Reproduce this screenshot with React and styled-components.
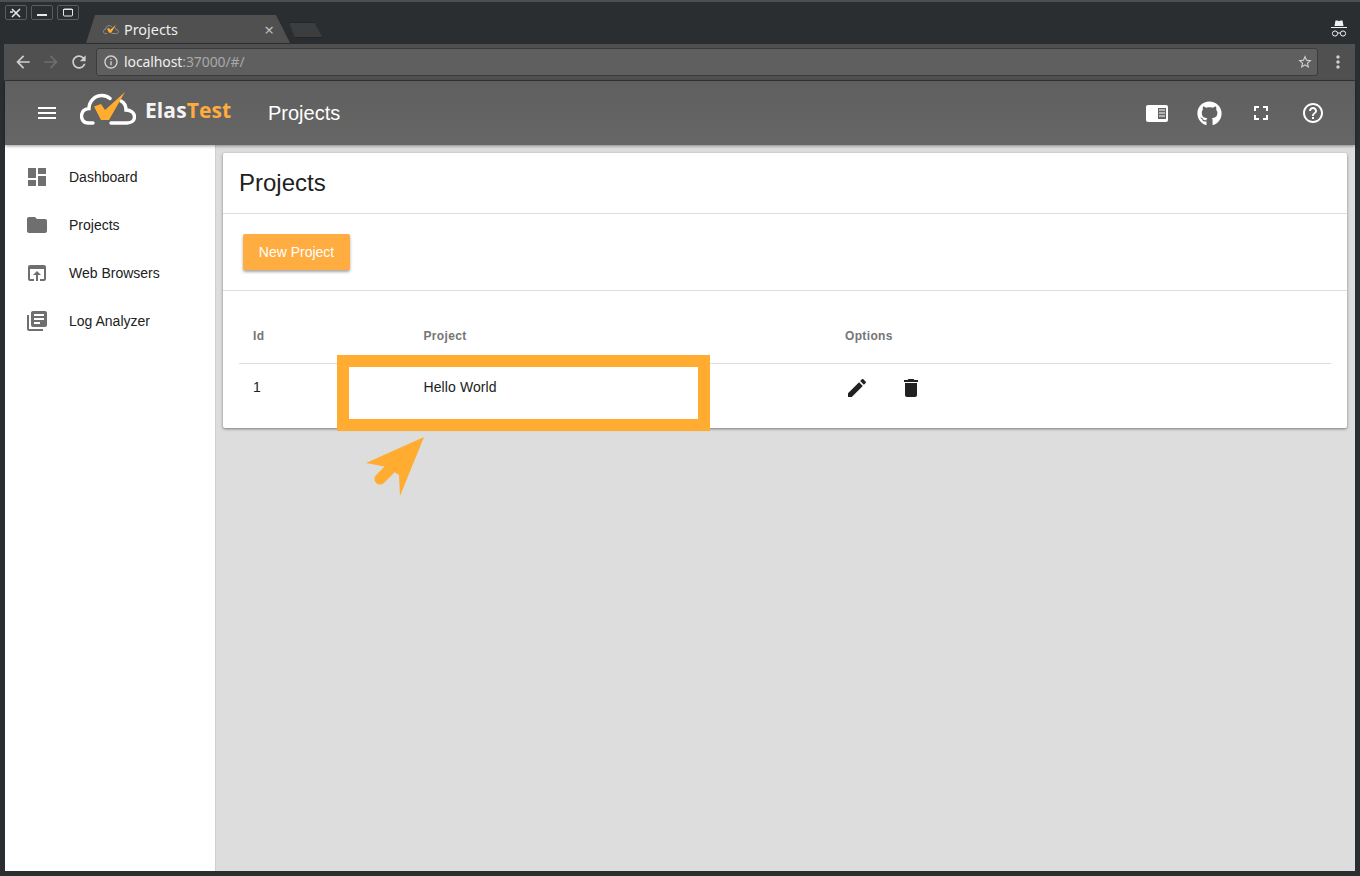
import React from 'react';
import styled, { createGlobalStyle } from 'styled-components';
import { FaGithub } from 'react-icons/fa';

const Global = createGlobalStyle`
  html, body { margin: 0; padding: 0; background: #2b2e31; }
  * { box-sizing: border-box; }
`;

const Window = styled.div`
  position: relative;
  width: 1360px;
  height: 876px;
  display: flex;
  flex-direction: column;
  overflow: hidden;
  background: #2b2e31;
  border-top: 2px solid #4d4f51;
  font-family: "Liberation Sans", sans-serif;
`;
const TabStrip = styled.div`
  height: 42px;
  flex: none;
  display: flex;
  align-items: flex-start;
  padding: 3px 12px 0 5px;
`;
const WinButtons = styled.div`
  display: flex;
  gap: 4px;
  margin-right: 6px;
`;
const WinButton = styled.div`
  width: 22px;
  height: 15px;
  border: 1px solid #5a5c5e;
  border-radius: 2px;
  display: flex;
  align-items: center;
  justify-content: center;
  color: #e4e4e4;
`;
const Tab = styled.div`
  width: 204px;
  height: 28px;
  margin-top: 10px;
  margin-left: 1px;
  padding: 0 16px 0 17px;
  display: flex;
  align-items: center;
  gap: 5px;
  background: #505050;
  clip-path: polygon(0 100%, 9px 0, 190px 0, 204px 100%);
  color: #eeeeee;
  font-family: "Noto Sans", sans-serif;
  font-size: 14.4px;
`;
const TabTitle = styled.span`
  flex: 1;
`;
const TabClose = styled.span`
  font-size: 17px;
  color: #bdbdbd;
  line-height: 1;
`;
const NewTab = styled.div`
  width: 34px;
  height: 16px;
  margin: 17px 0 0 -1px;
  background: #3b3d3f;
  border: 1px solid #232527;
  clip-path: polygon(0 0, 25px 0, 34px 100%, 6px 100%);
`;
const Spacer = styled.div`
  flex: 1;
`;
const Incognito = styled.svg`
  width: 18px;
  height: 18px;
  margin-top: 14px;
`;
const Frame = styled.div`
  flex: 1;
  min-height: 0;
  margin: 0 5px 5px 5px;
  display: flex;
  flex-direction: column;
`;
const Toolbar = styled.div`
  height: 37px;
  flex: none;
  margin-left: -1px;
  display: flex;
  align-items: center;
  gap: 8px;
  padding: 0 7px 0 9px;
  background: #505050;
  border-bottom: 1px solid #333;
  color: #d0d0d0;
`;
const NavIcon = styled.svg`
  width: 20px;
  height: 20px;
  fill: ${p => (p.$off ? '#6e6e6e' : '#d0d0d0')};
  flex: none;
`;
const Omnibox = styled.div`
  flex: 1;
  height: 28px;
  margin: 0 2px 0 -1px;
  background: #5f5f5f;
  border: 1px solid #3c3c3c;
  border-radius: 3px;
  display: flex;
  align-items: center;
  gap: 5px;
  padding: 0 4px 1px 6px;
  font-family: "Noto Sans", sans-serif;
  font-size: 14px;
  letter-spacing: -0.1px;
  color: #f0f0f0;
`;
const Port = styled.span`
  color: #a8a8a8;
`;
const OmniIcon = styled.svg`
  width: 16px;
  height: 16px;
  fill: #d4d4d4;
  flex: none;
`;
const AppBar = styled.div`
  height: 64px;
  flex: none;
  display: flex;
  align-items: center;
  background: linear-gradient(#5f5f5f, #666666);
  padding: 0 16px 0 30px;
  color: #fff;
  box-shadow: 0 1px 3px rgba(0,0,0,.4);
  position: relative;
`;
const MenuIcon = styled.svg`
  width: 24px;
  height: 24px;
  fill: #fff;
  flex: none;
`;
const Logo = styled.div`
  display: flex;
  align-items: center;
  margin-left: 21px;
  margin-bottom: 8px;
  width: 188px;
`;
const LogoText = styled.span`
  font-family: "Open Sans", sans-serif;
  font-weight: 700;
  font-size: 21px;
  margin-left: 9px;
  margin-top: 2px;
  color: #f4f4f4;
  letter-spacing: 0.1px;
`;
const LogoAccent = styled.span`
  color: #ffac3c;
`;
const BarTitle = styled.div`
  font-size: 20px;
  color: #fff;
`;
const BarButton = styled.div`
  width: 52px;
  height: 40px;
  display: flex;
  align-items: center;
  justify-content: center;
  color: #fff;
`;
const BarIcon = styled.svg`
  width: 24px;
  height: 24px;
  fill: #fff;
`;
const Body = styled.div`
  flex: 1;
  min-height: 0;
  display: flex;
`;
const Sidebar = styled.nav`
  width: 211px;
  flex: none;
  background: #fff;
  border-right: 1px solid #cfcfcf;
  padding-top: 8px;
`;
const NavItem = styled.div`
  height: 48px;
  display: flex;
  align-items: center;
  gap: 20px;
  padding-left: 20px;
  font-size: 14px;
  color: #212121;
`;
const NavGlyph = styled.svg`
  width: 24px;
  height: 24px;
  fill: #6f6f6f;
  flex: none;
`;
const Content = styled.main`
  flex: 1;
  min-width: 0;
  background: #dddddd;
  padding: 8px 8px 8px 7px;
`;
const Card = styled.section`
  position: relative;
  background: #fff;
  border-radius: 2px;
  box-shadow: 0 1px 3px rgba(0,0,0,.45);
`;
const CardTitle = styled.h1`
  margin: 0;
  height: 61px;
  padding: 0 16px;
  display: flex;
  align-items: center;
  font-size: 24px;
  font-weight: 400;
  color: #212121;
  border-bottom: 1px solid #dedede;
`;
const Actions = styled.div`
  height: 77px;
  padding: 20px;
  border-bottom: 1px solid #dedede;
`;
const PrimaryButton = styled.button`
  width: 107px;
  height: 36px;
  border: 0;
  border-radius: 2px;
  background: #ffac40;
  color: #fff;
  font: 400 14px "Liberation Sans", sans-serif;
  box-shadow: 0 2px 3px rgba(0,0,0,.35);
`;
const Table = styled.div`
  padding: 18px 16px 0;
`;
const Row = styled.div`
  display: grid;
  grid-template-columns: 170.5px 421.5px 1fr;
  align-items: center;
  padding-left: 14px;
  height: ${p => (p.$head ? '55px' : '64px')};
  padding-bottom: ${p => (p.$head ? '0' : '18px')};
  border-bottom: ${p => (p.$head ? '1px solid #dedede' : '0')};
  font-size: ${p => (p.$head ? '12px' : '14px')};
  font-weight: ${p => (p.$head ? 700 : 400)};
  letter-spacing: ${p => (p.$head ? '0.35px' : '0.1px')};
  color: ${p => (p.$head ? '#757575' : '#212121')};
`;
const Options = styled.div`
  display: flex;
  gap: 30px;
  margin-top: 1px;
`;
const ActionIcon = styled.svg`
  width: 24px;
  height: 24px;
  fill: #212121;
`;
const Highlight = styled.div`
  position: absolute;
  left: 114px;
  top: 202px;
  width: 373px;
  height: 76px;
  border: 12px solid #ffac30;
  pointer-events: none;
`;
const Arrow = styled.svg`
  position: absolute;
  left: 143px;
  top: 284px;
  width: 60px;
  height: 60px;
`;
const LogoSvg = styled.svg`
  flex: none;
`;

const Icon = ({ as: C, d, ...rest }) => (
  <C viewBox="0 0 24 24" {...rest}><path d={d} /></C>
);

const P = {
  menu: 'M3 18h18v-2H3v2zm0-5h18v-2H3v2zm0-7v2h18V6H3z',
  dashboard: 'M3 13h8V3H3v10zm0 8h8v-6H3v6zm10 0h8V11h-8v10zm0-18v6h8V3h-8z',
  folder: 'M10 4H4c-1.1 0-1.99.9-1.99 2L2 18c0 1.1.9 2 2 2h16c1.1 0 2-.9 2-2V8c0-1.1-.9-2-2-2h-8l-2-2z',
  browser: 'M19 4H5c-1.11 0-2 .9-2 2v12c0 1.1.89 2 2 2h4v-2H5V8h14v10h-4v2h4c1.1 0 2-.9 2-2V6c0-1.1-.89-2-2-2zm-7 6l-4 4h3v6h2v-6h3l-4-4z',
  library: 'M4 6H2v14c0 1.1.9 2 2 2h14v-2H4V6zm16-4H8c-1.1 0-2 .9-2 2v12c0 1.1.9 2 2 2h12c1.1 0 2-.9 2-2V4c0-1.1-.9-2-2-2zm-1 9H9V9h10v2zm-4 4H9v-2h6v2zm4-8H9V5h10v2z',
  edit: 'M3 17.25V21h3.75L17.81 9.94l-3.75-3.75L3 17.25zM20.71 7.04c.39-.39.39-1.02 0-1.41l-2.34-2.34c-.39-.39-1.02-.39-1.41 0l-1.83 1.83 3.75 3.75 1.83-1.83z',
  trash: 'M6 19c0 1.1.9 2 2 2h8c1.1 0 2-.9 2-2V7H6v12zM19 4h-3.5l-1-1h-5l-1 1H5v2h14V4z',
  fullscreen: 'M7 14H5v5h5v-2H7v-3zm-2-4h2V7h3V5H5v5zm12 7h-3v2h5v-5h-2v3zM14 5v2h3v3h2V5h-5z',
  help: 'M11 18h2v-2h-2v2zm1-16C6.48 2 2 6.48 2 12s4.48 10 10 10 10-4.48 10-10S17.52 2 12 2zm0 18c-4.41 0-8-3.59-8-8s3.59-8 8-8 8 3.59 8 8-3.59 8-8 8zm0-14c-2.21 0-4 1.79-4 4h2c0-1.1.9-2 2-2s2 .9 2 2c0 2-3 1.75-3 5h2c0-2.25 3-2.5 3-5 0-2.21-1.79-4-4-4z',
  back: 'M20 11H7.83l5.59-5.59L12 4l-8 8 8 8 1.41-1.41L7.83 13H20v-2z',
  forward: 'M12 4l-1.41 1.41L16.17 11H4v2h12.17l-5.58 5.59L12 20l8-8z',
  refresh: 'M17.65 6.35C16.2 4.9 14.21 4 12 4c-4.42 0-7.99 3.58-7.99 8s3.57 8 7.99 8c3.73 0 6.84-2.55 7.73-6h-2.08c-.82 2.33-3.04 4-5.65 4-3.31 0-6-2.69-6-6s2.69-6 6-6c1.66 0 3.14.69 4.22 1.78L13 11h7V4l-2.35 2.35z',
  info: 'M11 17h2v-6h-2v6zm1-15C6.48 2 2 6.48 2 12s4.48 10 10 10 10-4.48 10-10S17.52 2 12 2zm0 18c-4.41 0-8-3.59-8-8s3.59-8 8-8 8 3.59 8 8-3.59 8-8 8zM11 9h2V7h-2v2z',
  star: 'M22 9.24l-7.19-.62L12 2 9.19 8.63 2 9.24l5.46 4.73L5.82 21 12 17.27 18.18 21l-1.63-7.03L22 9.24zM12 15.4l-3.76 2.27 1-4.28-3.32-2.88 4.38-.38L12 6.1l1.71 4.04 4.38.38-3.32 2.88 1 4.28L12 15.4z',
  more: 'M12 8c1.1 0 2-.9 2-2s-.9-2-2-2-2 .9-2 2 .9 2 2 2zm0 2c-1.1 0-2 .9-2 2s.9 2 2 2 2-.9 2-2-.9-2-2-2zm0 6c-1.1 0-2 .9-2 2s.9 2 2 2 2-.9 2-2-.9-2-2-2z',
};

const CloudLogo = ({ width, height, stroke, sw }) => (
  <LogoSvg viewBox="0 0 56 34" width={width} height={height}>
    <path
      d="M13 31 H8 C3 31 1.5 26.5 1.5 24 C1.5 19.5 5 16.5 9 16.5 C9 9 15 3.5 22 3.5 C26 3.5 28 4.5 30 6.5 M41 9 C44 10.5 46 14 46 18 C51 18 54.5 21 54.5 25 C54.5 29 51 31 47 31 H31"
      fill="none"
      stroke={stroke}
      strokeWidth={sw}
      strokeLinecap="round"
    />
    <path d="M14 14.5 L21 12 L25 18 L45 0 L29 28 L21 28 Z" fill="#ffac30" />
  </LogoSvg>
);

const navItems = [
  ['Dashboard', P.dashboard],
  ['Projects', P.folder],
  ['Web Browsers', P.browser],
  ['Log Analyzer', P.library],
];

export default function App() {
  return (
    <Window>
      <Global />
      <TabStrip>
        <WinButtons>
          <WinButton>
            <svg width="12" height="10" viewBox="0 0 12 10" fill="none" stroke="#e8e8e8" strokeWidth="1.6">
              <path d="M2 1l8 8M10 1L2 9M0 4h3" />
            </svg>
          </WinButton>
          <WinButton>
            <svg width="10" height="8" viewBox="0 0 10 8" fill="#e8e8e8"><rect x="0" y="5" width="10" height="2" /></svg>
          </WinButton>
          <WinButton>
            <svg width="10" height="9" viewBox="0 0 10 9" fill="none" stroke="#e8e8e8" strokeWidth="1"><rect x="0.5" y="1" width="9" height="7" rx="1" /><path d="M0 1.5h10" /></svg>
          </WinButton>
        </WinButtons>
        <Tab>
          <CloudLogo width={16} height={11} stroke="#9a9a9a" sw={3} />
          <TabTitle>Projects</TabTitle>
          <TabClose>×</TabClose>
        </Tab>
        <NewTab />
        <Spacer />
        <Incognito viewBox="0 0 18 18">
          <path d="M5.5 1.5h2l1.5.7 1.5-.7h2L13.5 7h-9z M1 8h16v1H1z" fill="#f0f0f0" />
          <circle cx="5" cy="14.5" r="2.6" fill="none" stroke="#f0f0f0" strokeWidth="1" />
          <circle cx="13" cy="14.5" r="2.6" fill="none" stroke="#f0f0f0" strokeWidth="1" />
          <path d="M7.5 14h3" stroke="#f0f0f0" strokeWidth="1" />
        </Incognito>
      </TabStrip>
      <Frame>
        <Toolbar>
          <Icon as={NavIcon} d={P.back} />
          <Icon as={NavIcon} d={P.forward} $off />
          <Icon as={NavIcon} d={P.refresh} />
          <Omnibox>
            <Icon as={OmniIcon} d={P.info} />
            <span>localhost<Port>:37000/#/</Port></span>
            <Spacer />
            <Icon as={OmniIcon} d={P.star} />
          </Omnibox>
          <Icon as={NavIcon} d={P.more} />
        </Toolbar>
        <AppBar>
          <Icon as={MenuIcon} d={P.menu} />
          <Logo>
            <CloudLogo width={56} height={34} stroke="#ffffff" sw={3.4} />
            <LogoText>Elas<LogoAccent>Test</LogoAccent></LogoText>
          </Logo>
          <BarTitle>Projects</BarTitle>
          <Spacer />
          <BarButton>
            <svg width="22" height="17" viewBox="0 0 22 17">
              <rect width="22" height="17" rx="2" fill="#fff" />
              <rect x="12" y="3" width="8" height="11" fill="#666" />
              <path d="M13 5h6M13 8h6M13 11h6" stroke="#fff" strokeWidth="1.2" />
            </svg>
          </BarButton>
          <BarButton><FaGithub size={25} /></BarButton>
          <BarButton><Icon as={BarIcon} d={P.fullscreen} /></BarButton>
          <BarButton><Icon as={BarIcon} d={P.help} /></BarButton>
        </AppBar>
        <Body>
          <Sidebar>
            {navItems.map(([label, d]) => (
              <NavItem key={label}>
                <Icon as={NavGlyph} d={d} />
                {label}
              </NavItem>
            ))}
          </Sidebar>
          <Content>
            <Card>
              <CardTitle>Projects</CardTitle>
              <Actions>
                <PrimaryButton>New Project</PrimaryButton>
              </Actions>
              <Table>
                <Row $head>
                  <div>Id</div>
                  <div>Project</div>
                  <div>Options</div>
                </Row>
                <Row>
                  <div>1</div>
                  <div>Hello World</div>
                  <Options>
                    <Icon as={ActionIcon} d={P.edit} />
                    <Icon as={ActionIcon} d={P.trash} />
                  </Options>
                </Row>
              </Table>
              <Highlight />
              <Arrow viewBox="0 0 60 60">
                <path d="M58 0 L0 26 L21 30 L33 38 L34 59 Z" fill="#ffac30" />
                <path d="M26 30 L14 42" stroke="#ffac30" strokeWidth="11" strokeLinecap="round" />
              </Arrow>
            </Card>
          </Content>
        </Body>
      </Frame>
    </Window>
  );
}
